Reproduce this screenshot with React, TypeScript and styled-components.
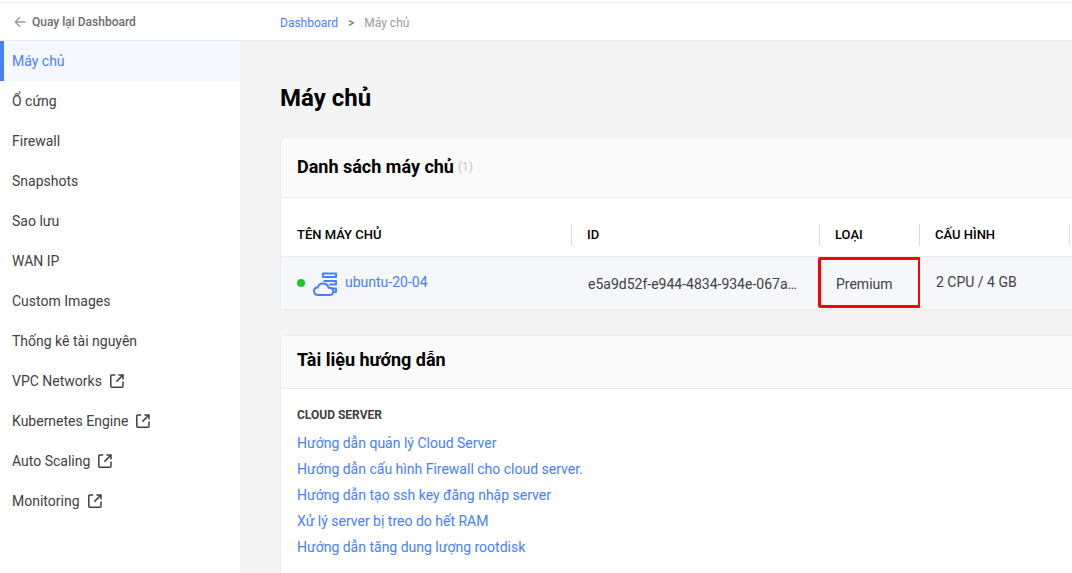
import React from "react";
import styled, { createGlobalStyle } from "styled-components";

const GlobalStyle = createGlobalStyle`
  *, *::before, *::after { box-sizing: border-box; }
  body {
    margin: 0;
    background: #f4f4f4;
    color: #414141;
    font: 14px/20px Roboto, "Liberation Sans", sans-serif;
  }
  h1, h2, h3, ul { margin: 0; padding: 0; }
  ul { list-style: none; }
  a { text-decoration: none; color: #4680ff; }
`;

const Page = styled.div`
  display: flex;
  flex-direction: column;
  min-height: 100vh;
  overflow-x: hidden;
`;

const TopBar = styled.header`
  display: flex;
  align-items: center;
  margin-top: 2px;
  height: 39px;
  background: #fff;
  border-top: 1px solid #ececec;
  border-bottom: 1px solid #ebebeb;
  box-shadow: 0 -2px 0 #fff;
  font-size: 12px;
`;

const BackLink = styled.a`
  display: flex;
  align-items: center;
  gap: 6px;
  width: 280px;
  padding-left: 14px;
  color: #6c6c6c;
  font-weight: 500;
`;

const Breadcrumb = styled.nav`
  display: flex;
  gap: 10px;
  padding-top: 2px;
  color: #9b9b9b;
`;

const Separator = styled.span`
  color: #7c7c7c;
  font-weight: 500;
`;

const Body = styled.div`
  display: flex;
  flex: 1;
`;

const Sidebar = styled.nav`
  flex: 0 0 240px;
  background: #fff;
`;

const SideLink = styled.a<{ $active?: boolean }>`
  display: flex;
  align-items: center;
  gap: 8px;
  height: 40px;
  padding-left: 8px;
  border-left: 4px solid ${(p) => (p.$active ? "#4680ff" : "transparent")};
  background: ${(p) => (p.$active ? "#f5f8ff" : "transparent")};
  color: ${(p) => (p.$active ? "#4680ff" : "#414141")};
`;

const Main = styled.main`
  flex: 1;
  min-width: 0;
  padding: 42px 0 0 40px;
  display: flex;
  flex-direction: column;
  gap: 24px;
`;

const Title = styled.h1`
  color: #000;
  font-size: 24px;
  line-height: 30px;
  font-weight: 700;
`;

const Card = styled.section<{ $grow?: boolean }>`
  flex: ${(p) => (p.$grow ? "1 0 auto" : "0 0 auto")};
  background: #fff;
  border: 1px solid #ececec;
  border-right: 0;
  border-bottom-width: ${(p) => (p.$grow ? "0" : "2px")};
  border-radius: 4px 0 0 ${(p) => (p.$grow ? "0" : "4px")};
`;

const CardHeader = styled.div<{ $tall?: boolean }>`
  display: flex;
  align-items: center;
  gap: 4px;
  height: ${(p) => (p.$tall ? "60px" : "53px")};
  padding: 0 16px ${(p) => (p.$tall ? "2px" : "4px")};
  background: #fafafa;
  border-bottom: 1px solid #ececec;
  border-radius: 4px 0 0 0;
`;

const CardTitle = styled.h2`
  color: #000;
  font-size: 18px;
  line-height: 24px;
  font-weight: 700;
`;

const Count = styled.span`
  color: #c4c4c4;
  font-size: 12px;
`;

const Table = styled.table`
  width: 100%;
  table-layout: fixed;
  border-spacing: 0;
`;

const HeadLabel = styled.div`
  height: 22px;
  padding-left: 15px;
  border-right: 1px solid #dcdcdc;
  line-height: 22px;
`;

const HeadCell = styled.th`
  height: 59px;
  padding: 16px 0 0;
  border-bottom: 1px solid #ececec;
  color: #000;
  font-size: 13px;
  font-weight: 500;
  text-align: left;

  &:first-child ${HeadLabel} {
    padding-left: 16px;
  }
`;

const cellPadding = {
  center: "0 16px",
  raised: "0 16px 2px",
  lowered: "2px 16px 0",
};

const Cell = styled.td<{ $align?: keyof typeof cellPadding }>`
  position: relative;
  height: 52px;
  padding: ${(p) => cellPadding[p.$align ?? "center"]};
  background: #f5f7fb;
  white-space: nowrap;
`;

const Ellipsis = styled.div`
  max-width: 211px;
  overflow: hidden;
  text-overflow: ellipsis;
`;

const ServerName = styled.div`
  display: flex;
  align-items: center;
  gap: 8px;

  a {
    padding-bottom: 2px;
  }
`;

const StatusDot = styled.span`
  width: 8px;
  height: 8px;
  border-radius: 50%;
  background: #1cc52c;
`;

const Highlight = styled.span`
  position: absolute;
  inset: 0 -1px 1px -2px;
  border: 3px solid #fe0000;
  border-radius: 2px;
  pointer-events: none;
`;

const Docs = styled.div`
  padding: 16px;
`;

const DocsHeading = styled.h3`
  font-size: 12px;
  line-height: 20px;
  font-weight: 700;
  margin-bottom: 5px;
`;

const DocItem = styled.li`
  line-height: 26px;
`;

function BackArrow() {
  return (
    <svg width="12" height="12" viewBox="0 0 12 12" fill="none" stroke="#999" strokeWidth="1.3" aria-hidden="true">
      <path d="M11.5 6H1.5M6 1.2 1.2 6 6 10.8" />
    </svg>
  );
}

function ExternalIcon() {
  return (
    <svg width="14" height="14" viewBox="0 0 14 14" fill="none" stroke="#414141" strokeWidth="1.5" aria-hidden="true">
      <path d="M5.2 1H1.8Q.8 1 .8 2V12.2Q.8 13.2 1.8 13.2H12Q13 13.2 13 12.2V7.6M8.4 1H13V5.6M13 1 6.4 7.6" />
    </svg>
  );
}

function CloudServerIcon() {
  return (
    <svg width="24" height="26" viewBox="0 -2 24 26" fill="none" stroke="#4680ff" strokeWidth="2" strokeLinejoin="round" aria-hidden="true">
      <path d="M9.9 1.4H23V5H9.9ZM10.6 9H23V12.6H16.2M18.6 16.6H23V20H20.6" />
      <path d="M5.2 23C2.7 23 1 21.4 1 19.1C1 16.9 2.6 15.5 4.7 15.5C5.4 13 7.4 11.5 10 11.5C12.8 11.5 14.9 13.1 15.6 15.8C18.4 15.6 20.3 17.1 20.3 19.3C20.3 21.5 18.8 23 16.4 23Z" />
    </svg>
  );
}

const menu = [
  { label: "Máy chủ", active: true },
  { label: "Ổ cứng" },
  { label: "Firewall" },
  { label: "Snapshots" },
  { label: "Sao lưu" },
  { label: "WAN IP" },
  { label: "Custom Images" },
  { label: "Thống kê tài nguyên" },
  { label: "VPC Networks", external: true },
  { label: "Kubernetes Engine", external: true },
  { label: "Auto Scaling", external: true },
  { label: "Monitoring", external: true },
];

const docs = [
  "Hướng dẫn quản lý Cloud Server",
  "Hướng dẫn cấu hình Firewall cho cloud server.",
  "Hướng dẫn tạo ssh key đăng nhập server",
  "Xử lý server bị treo do hết RAM",
  "Hướng dẫn tăng dung lượng rootdisk",
];

const columns = ["TÊN MÁY CHỦ", "ID", "LOẠI", "CẤU HÌNH"];

export default function App() {
  return (
    <Page>
      <GlobalStyle />
      <TopBar>
        <BackLink href="#">
          <BackArrow />
          Quay lại Dashboard
        </BackLink>
        <Breadcrumb aria-label="Breadcrumb">
          <a href="#">Dashboard</a>
          <Separator>&gt;</Separator>
          <span>Máy chủ</span>
        </Breadcrumb>
      </TopBar>
      <Body>
        <Sidebar>
          <ul>
            {menu.map((m) => (
              <li key={m.label}>
                <SideLink href="#" $active={m.active}>
                  {m.label}
                  {m.external && <ExternalIcon />}
                </SideLink>
              </li>
            ))}
          </ul>
        </Sidebar>
        <Main>
          <Title>Máy chủ</Title>
          <Card>
            <CardHeader $tall>
              <CardTitle>Danh sách máy chủ</CardTitle>
              <Count>(1)</Count>
            </CardHeader>
            <Table>
              <colgroup>
                <col width="291" />
                <col width="248" />
                <col width="100" />
                <col width="150" />
                <col />
              </colgroup>
              <thead>
                <tr>
                  {columns.map((c) => (
                    <HeadCell key={c} scope="col">
                      <HeadLabel>{c}</HeadLabel>
                    </HeadCell>
                  ))}
                  <HeadCell as="td" />
                </tr>
              </thead>
              <tbody>
                <tr>
                  <Cell>
                    <ServerName>
                      <StatusDot />
                      <CloudServerIcon />
                      <a href="#">ubuntu-20-04</a>
                    </ServerName>
                  </Cell>
                  <Cell $align="lowered">
                    <Ellipsis>e5a9d52f-e944-4834-934e-067a5c81d2b7</Ellipsis>
                  </Cell>
                  <Cell $align="lowered">
                    Premium
                    <Highlight />
                  </Cell>
                  <Cell $align="raised">2 CPU / 4 GB</Cell>
                  <Cell />
                </tr>
              </tbody>
            </Table>
          </Card>
          <Card $grow>
            <CardHeader>
              <CardTitle>Tài liệu hướng dẫn</CardTitle>
            </CardHeader>
            <Docs>
              <DocsHeading>CLOUD SERVER</DocsHeading>
              <ul>
                {docs.map((d) => (
                  <DocItem key={d}>
                    <a href="#">{d}</a>
                  </DocItem>
                ))}
              </ul>
            </Docs>
          </Card>
        </Main>
      </Body>
    </Page>
  );
}
